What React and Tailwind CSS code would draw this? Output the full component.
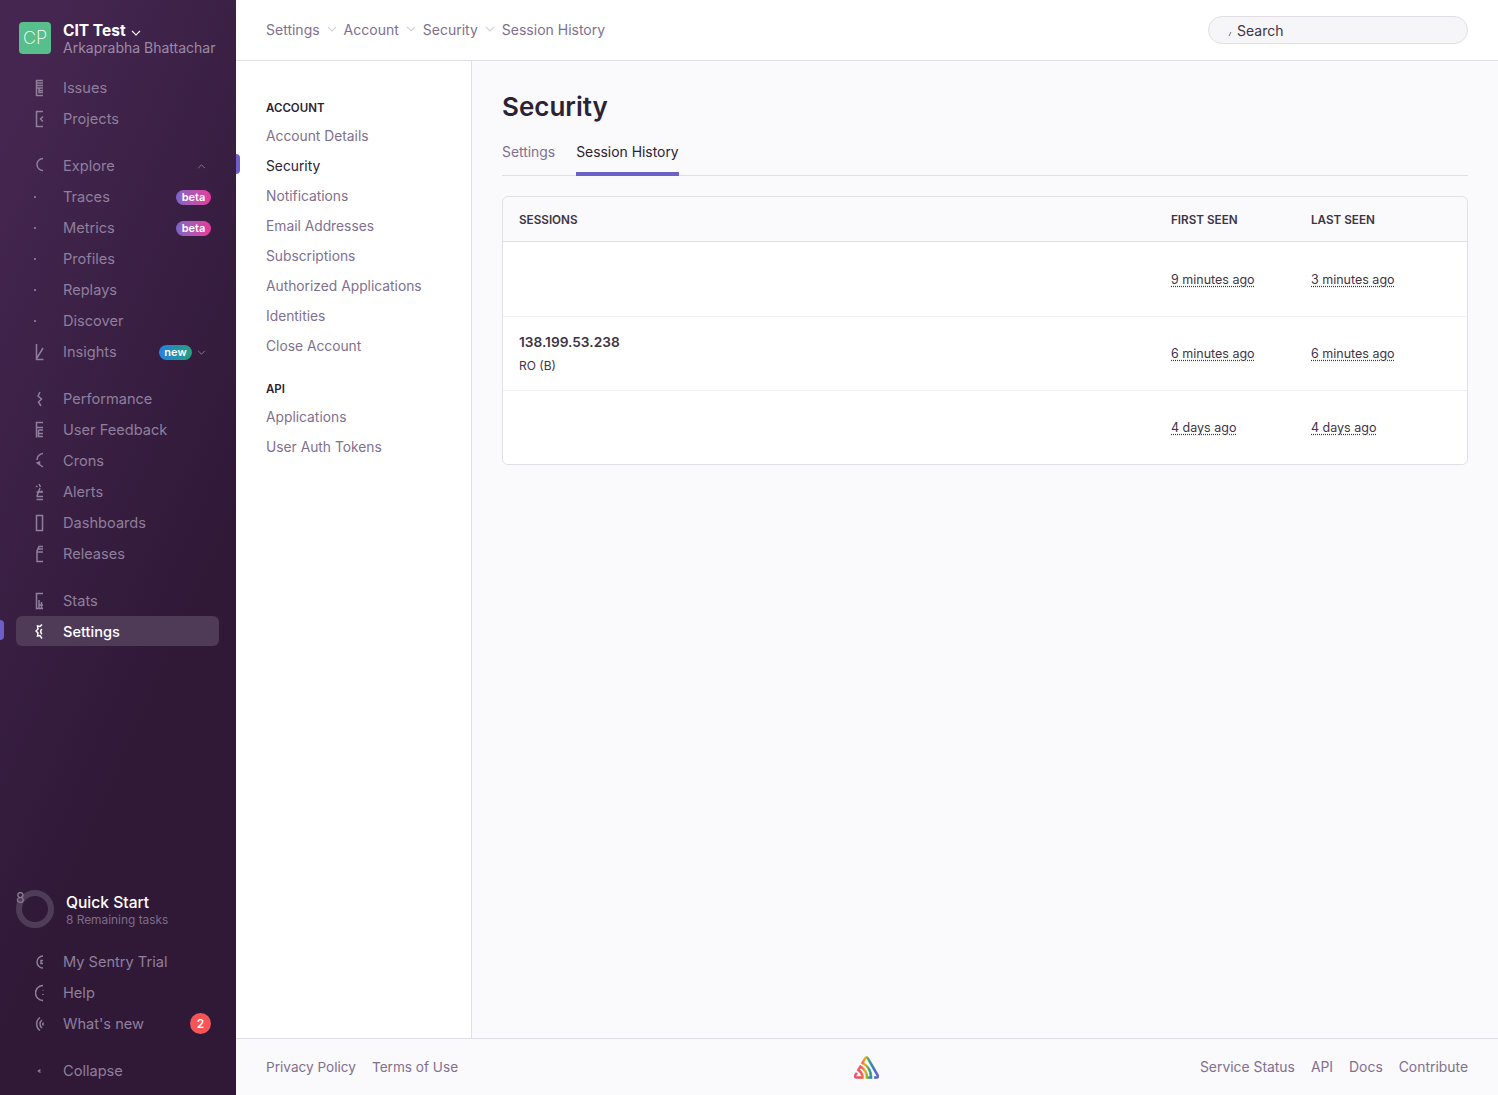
// App.jsx
import React from 'react';

const font = { fontFamily: 'Inter, "Noto Sans", sans-serif' };

// the sidebar icons are cut off on their right side in the screenshot, so each one is only a 9px sliver
const iconPaths = {
  issues: 'M8 1.5H1.5V16.5H8M1.5 4H8M1.5 6.5H8M1.5 9H8M4 9V13.5H8M4 11.5H8',
  projects: 'M8 1.5H1.5V16.5H8M8 6.5L5.5 9L8 11.5',
  explore: 'M8 1.5A6 6 0 0 0 8 13.5',
  insights: 'M1.5 1V16.5H8.5M2 15L8 5',
  performance: 'M5 2L3 6L6.5 9L3.5 12L6 16',
  feedback: 'M8 1.5H1.5V16.5M1.5 6.5H8M3.5 9H8M3.5 9V15.5H8M3.5 12.5H8',
  crons: 'M8 1.5A6.5 6.5 0 0 0 2 8M1.5 11L4.5 10V13M2 11L8 15',
  alerts: 'M4 1L5.5 4M1 3L2.5 4M5 5L2 13M1.5 9H8M1.5 13.5H8M1.5 16.5H8M6.5 7.5V10',
  dashboards: 'M1.5 1.5H7.5V16.5H1.5Z',
  releases: 'M8 1.5H4L2 6V16.5H8M3 4H8M2 7H8',
  stats: 'M8 1.5H1.5V16.5H8M4 8V16.5M6.5 10V16.5M4 13H8',
  settings: 'M7 1.5L5 3.5L2.5 3L3 6L1 8L3 10L2.5 13L5 12.5L7 15.5M7 6A3 3 0 0 0 7 11',
  trial: 'M8 3A6 6 0 0 0 8 15M8 7.5H6V10.5H8',
  help: 'M8 1.5A7.5 7.5 0 0 0 8 16.5M8 6V6.5M8 10V11',
  whatsnew: 'M5 2.5A8 8 0 0 0 5 15.5M7 5A5 5 0 0 0 7 13M8.5 7.5A2 2 0 0 0 8.5 10.5',
  collapse: 'M5.5 7.5L3.5 9L5.5 10.5',
};

const SideIcon = ({ name }) => (
  <svg viewBox="0 0 9 18" className="w-[9px] h-[18px] shrink-0" fill="none" stroke="currentColor" strokeWidth="1.5">
    <path d={iconPaths[name]} />
  </svg>
);

const Dot = () => <span className="block -ml-px w-[2px] h-[2px] rounded-full bg-[#9a8aa6]" />;

const Chevron = ({ up, className }) => (
  <svg viewBox="0 0 10 6" className={`shrink-0 ${className}`} fill="none" stroke="currentColor" strokeWidth="1.1">
    <path d={up ? 'M1 5L5 1L9 5' : 'M1 1L5 5L9 1'} />
  </svg>
);

const Beta = () => (
  <span className="ml-auto mr-[8px] w-[35px] h-[15px] rounded-full bg-gradient-to-r from-[#7d62c8] to-[#e7369a] text-white text-[11px] font-semibold leading-[15px] text-center">
    beta
  </span>
);

const NavRow = ({ icon, label, active, children }) => (
  <div
    className={`flex items-center h-[30px] mb-px mx-[16px] w-[203px] rounded-md text-[14.6px] ${
      active ? '-mt-px pt-[2px] bg-[#4f3a58] text-white font-medium' : 'text-[#8f7f9c]'
    }`}
  >
    <span className="w-[47px] pl-[19px] flex items-center shrink-0">
      {icon ? <SideIcon name={icon} /> : <Dot />}
    </span>
    <span className="mt-[2px]">{label}</span>
    {children}
  </div>
);

const Sidebar = () => (
  <aside
    style={font}
    className="relative w-[236px] shrink-0 h-full flex flex-col bg-[linear-gradient(294.17deg,#2f1937_35.57%,#452650_92.42%)]"
  >
    <div className="flex items-start pl-[19px] pt-[22px] h-[73px]">
      <div className="w-[32px] h-[32px] rounded bg-[#57be8c] text-white text-[18px] font-extralight leading-[32px] text-center">
        CP
      </div>
      <div className="ml-[12px]">
        <div className="flex items-center text-white text-[15.5px] font-bold leading-[20px] -mt-[1px]">
          CIT Test
          <Chevron className="w-[10px] h-[6px] ml-[5px] mt-[4px]" />
        </div>
        <div className="-mt-[1px] text-[#9b8ba7] text-[14px] leading-[15px] whitespace-nowrap">Arkaprabha Bhattachar</div>
      </div>
    </div>

    <NavRow icon="issues" label="Issues" />
    <NavRow icon="projects" label="Projects" />

    <div className="mt-[16px]">
      <NavRow icon="explore" label="Explore">
        <Chevron up className="w-[9px] h-[5px] ml-auto mr-[13px]" />
      </NavRow>
      <NavRow label="Traces"><Beta /></NavRow>
      <NavRow label="Metrics"><Beta /></NavRow>
      <NavRow label="Profiles" />
      <NavRow label="Replays" />
      <NavRow label="Discover" />
      <NavRow icon="insights" label="Insights">
        <span className="ml-auto w-[33px] h-[15px] rounded-full bg-gradient-to-r from-[#2b7fe0] to-[#2a9d7c] text-white text-[11px] font-semibold leading-[15px] text-center">
          new
        </span>
        <Chevron className="w-[9px] h-[5px] ml-[5px] mr-[13px]" />
      </NavRow>
    </div>

    <div className="mt-[16px]">
      <NavRow icon="performance" label="Performance" />
      <NavRow icon="feedback" label="User Feedback" />
      <NavRow icon="crons" label="Crons" />
      <NavRow icon="alerts" label="Alerts" />
      <NavRow icon="dashboards" label="Dashboards" />
      <NavRow icon="releases" label="Releases" />
    </div>

    <div className="mt-[16px]">
      <NavRow icon="stats" label="Stats" />
      <NavRow icon="settings" label="Settings" active />
    </div>

    <div className="mt-auto pb-[8px]">
      <div className="flex items-center pl-[16px] h-[38px] mb-[19px]">
        <div className="relative w-[38px] h-[38px] rounded-full border-[6px] border-[#4e3c58] shrink-0">
          <span className="absolute -left-[6px] -top-[7px] text-[14px] leading-[17px] text-[#8f7f9c]">8</span>
        </div>
        <div className="ml-[12px]">
          <div className="text-white text-[15.6px] font-medium leading-[20px] mt-px">Quick Start</div>
          <div className="text-[#7d6c89] text-[11.9px] leading-[14px]">8 Remaining tasks</div>
        </div>
      </div>
      <NavRow icon="trial" label="My Sentry Trial" />
      <NavRow icon="help" label="Help" />
      <NavRow icon="whatsnew" label="What's new">
        <span className="ml-auto mr-[8px] mb-[2px] w-[21px] h-[21px] rounded-full bg-[#f55459] text-white text-[12px] font-semibold leading-[21px] text-center">
          2
        </span>
      </NavRow>
      <div className="mt-[17px]">
        <NavRow icon="collapse" label="Collapse" />
      </div>
    </div>

    <span className="absolute left-0 top-[620px] w-[4px] h-[20px] rounded-r bg-[#6c5fc7]" />
  </aside>
);

const crumbs = ['Settings', 'Account', 'Security', 'Session History'];

const TopBar = () => (
  <header className="h-[61px] shrink-0 bg-white border-b border-[#e2dee6] flex items-center justify-between pl-[30px] pr-[30px]">
    <div className="flex items-center mb-[2px] text-[14px] text-[#80708f]">
      {crumbs.map((c, i) => (
        <React.Fragment key={c}>
          <span>{c}</span>
          {i < crumbs.length - 1 && <Chevron className="w-[10px] h-[6px] mx-[7px] text-[#d5d0db]" />}
        </React.Fragment>
      ))}
    </div>
    <div className="relative w-[260px] h-[28px] rounded-full bg-[#f6f5f7] border border-[#e2dee6] pl-[28px] text-[14px] leading-[28px] text-[#3e3446]">
      <svg viewBox="0 0 4 6" className="absolute left-[19px] top-[14px] w-[4px] h-[6px]" fill="none" stroke="#80708f" strokeWidth="1">
        <path d="M3 1L1 5" />
      </svg>
      Search
    </div>
  </header>
);

const accountLinks = [
  'Account Details',
  'Security',
  'Notifications',
  'Email Addresses',
  'Subscriptions',
  'Authorized Applications',
  'Identities',
  'Close Account',
];
const apiLinks = ['Applications', 'User Auth Tokens'];

const SubLink = ({ label }) => {
  const active = label === 'Security';
  return (
    <div className={`relative h-[30px] leading-[30px] text-[13.8px] ${active ? 'text-[#2b2233]' : 'text-[#80708f]'}`}>
      {active && <span className="absolute -left-[30px] top-[3px] w-[4px] h-[20px] rounded-r bg-[#6c5fc7]" />}
      {label}
    </div>
  );
};

const SubNav = () => (
  <nav className="w-[236px] shrink-0 bg-white border-r border-[#e2dee6] pl-[30px] pt-[37px]">
    <div className="text-[11.5px] font-semibold text-[#2b2233] leading-[20px] mb-[3px]">ACCOUNT</div>
    {accountLinks.map((l) => <SubLink key={l} label={l} />)}
    <div className="text-[11.5px] font-semibold text-[#2b2233] leading-[20px] mt-[18px] mb-[3px]">API</div>
    {apiLinks.map((l) => <SubLink key={l} label={l} />)}
  </nav>
);

const Time = ({ children }) => (
  <span className="text-[12.5px] text-[#3e3446] underline decoration-dotted decoration-[#3e3446] underline-offset-2">{children}</span>
);

const sessions = [
  { first: '9 minutes ago', last: '3 minutes ago' },
  { ip: '138.199.53.238', place: 'RO (B)', first: '6 minutes ago', last: '6 minutes ago' },
  { first: '4 days ago', last: '4 days ago' },
];

const SessionPanel = () => (
  <div className="mt-[20px] rounded-md border border-[#e2dee6] overflow-hidden">
    <div className="grid grid-cols-[1fr_140px_140px] px-4 pt-[3px] h-[45px] items-center border-b border-[#e2dee6] text-[11.7px] font-semibold text-[#3e3446]">
      <div>SESSIONS</div>
      <div>FIRST SEEN</div>
      <div>LAST SEEN</div>
    </div>
    {sessions.map((s, i) => (
      <div
        key={i}
        className={`grid grid-cols-[1fr_140px_140px] px-4 h-[74px] items-center bg-white ${i > 0 ? 'border-t border-[#f0eef2]' : ''}`}
      >
        <div className="mb-[2px]">
          {s.ip && (
            <>
              <div className="text-[13.7px] font-semibold leading-[20px] text-[#3e3446]">{s.ip}</div>
              <div className="text-[12px] leading-[16px] mt-[6px] text-[#3e3446]">{s.place}</div>
            </>
          )}
        </div>
        <div className="mb-[3px]"><Time>{s.first}</Time></div>
        <div className="mb-[3px]"><Time>{s.last}</Time></div>
      </div>
    ))}
  </div>
);

const Content = () => (
  <main className="flex-1 px-[30px] pt-[30px]">
    <h1 className="text-[26px] font-semibold leading-[32px] text-[#2b2233]">Security</h1>
    <div className="mt-[7px] flex gap-[21px] border-b border-[#e2dee6] text-[13.9px] h-[46px]">
      <div className="pt-[12px] text-[#80708f]">Settings</div>
      <div className="pt-[12px] text-[#2b2233] border-b-4 border-[#6c5fc7] h-[46px]">Session History</div>
    </div>
    <SessionPanel />
  </main>
);

const Logo = () => (
  <svg viewBox="0 0 50 44" className="w-[25px] h-[23px]">
    <defs>
      <linearGradient id="rainbow" x1="0" x2="1" y1="0" y2="0">
        <stop offset="0" stopColor="#e1567c" />
        <stop offset="0.3" stopColor="#f55459" />
        <stop offset="0.45" stopColor="#f5b000" />
        <stop offset="0.6" stopColor="#2ba185" />
        <stop offset="0.8" stopColor="#3b6ecc" />
        <stop offset="1" stopColor="#6c5fc7" />
      </linearGradient>
    </defs>
    <path
      fill="url(#rainbow)"
      stroke="url(#rainbow)"
      strokeWidth="1.2"
      d="M29,2.26a4.67,4.67,0,0,0-8,0L14.42,13.53A32.21,32.21,0,0,1,32.17,40.19H27.55A27.68,27.68,0,0,0,12.09,17.47L6,28a15.92,15.92,0,0,1,9.23,12.17H4.62A.76.76,0,0,1,4,39.06l2.94-5a10.74,10.74,0,0,0-3.36-1.9l-2.91,5a4.54,4.54,0,0,0,1.69,6.24A4.66,4.66,0,0,0,4.62,44H19.15a19.4,19.4,0,0,0-8-17.31l2.31-4A23.87,23.87,0,0,1,23.76,44H36.07a35.88,35.88,0,0,0-16.41-31.8l4.67-8a.77.77,0,0,1,1.05-.27c.53.29,20.29,34.77,20.66,35.17a.76.76,0,0,1-.68,1.13H40.6q.09,1.91,0,3.81h4.78A4.59,4.59,0,0,0,50,39.43a4.49,4.49,0,0,0-.62-2.28Z"
    />
  </svg>
);

const Footer = () => (
  <footer className="h-[57px] shrink-0 border-t border-[#e2dee6] px-[30px] grid grid-cols-3 items-center text-[#80708f]">
    <div className="flex gap-[16px] text-[13.6px]">
      <span>Privacy Policy</span>
      <span>Terms of Use</span>
    </div>
    <div className="flex justify-center"><Logo /></div>
    <div className="flex justify-end gap-[16px] text-[13.9px]">
      <span>Service Status</span>
      <span>API</span>
      <span>Docs</span>
      <span>Contribute</span>
    </div>
  </footer>
);

const App = () => (
  <div style={font} className="flex h-[1095px] w-full overflow-hidden bg-[#faf9fb]">
    <Sidebar />
    <div className="flex-1 flex flex-col min-w-0">
      <TopBar />
      <div className="flex-1 flex min-h-0">
        <SubNav />
        <Content />
      </div>
      <Footer />
    </div>
  </div>
);

export default App;
